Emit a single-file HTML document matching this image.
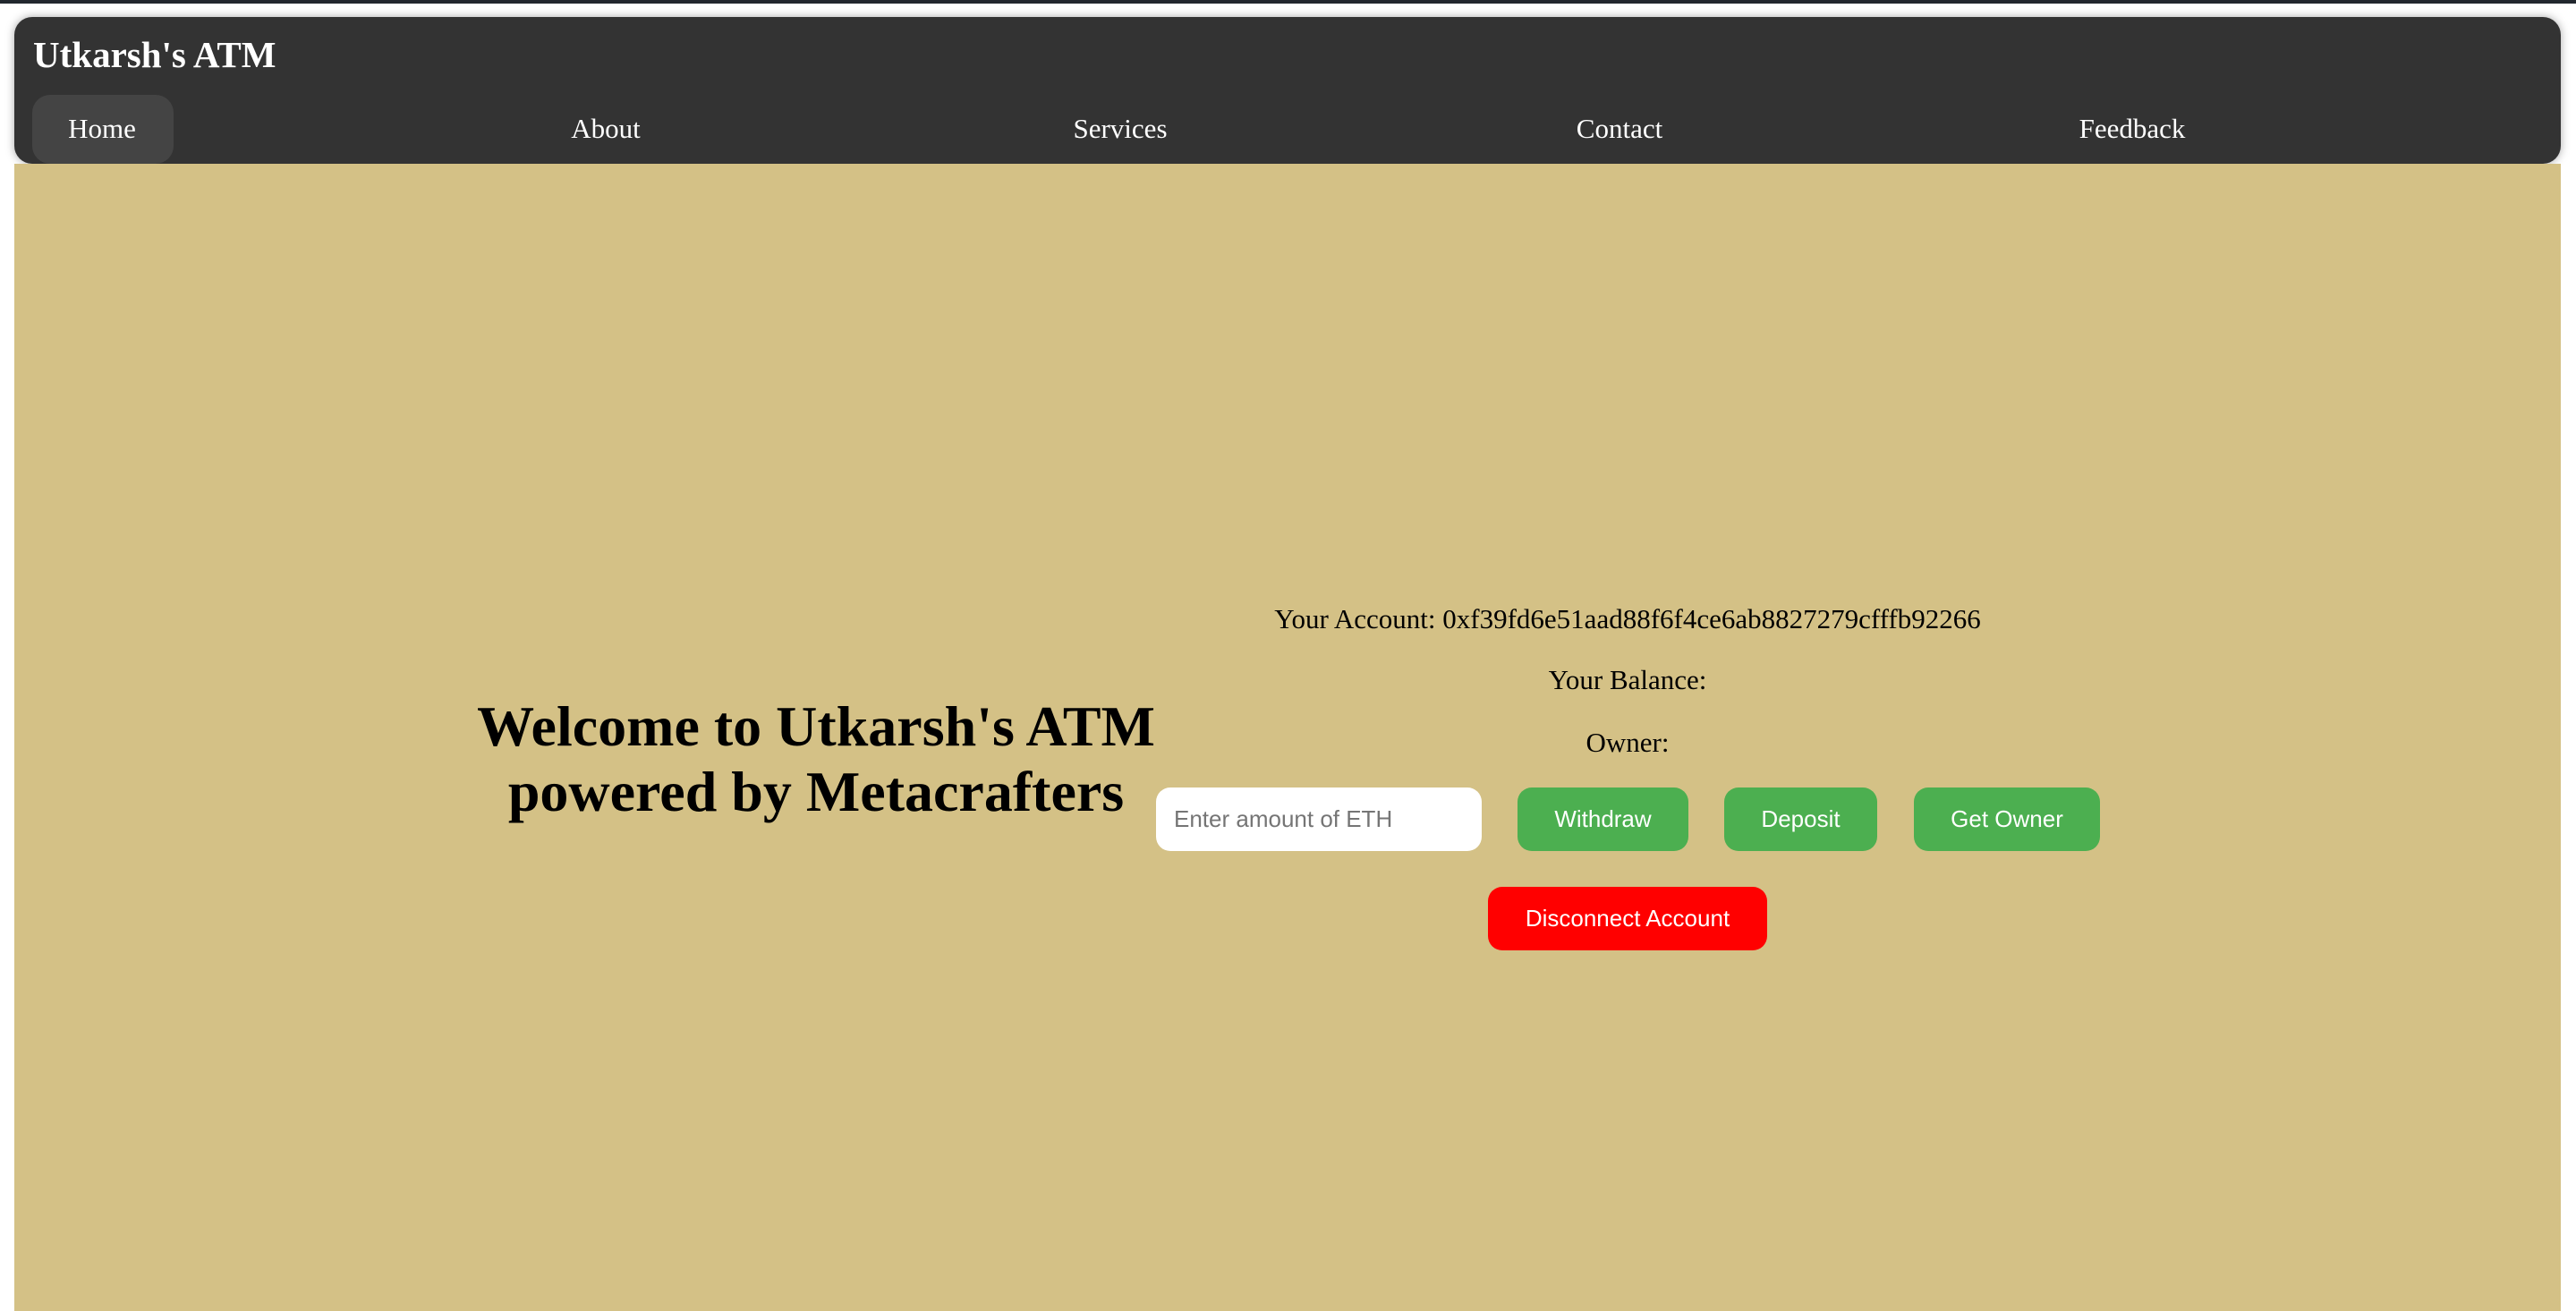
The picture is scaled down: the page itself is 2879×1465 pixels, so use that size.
<!DOCTYPE html>
<html><head><meta charset="utf-8"><style>
body{margin:0;width:2879px;height:1465px;background:#fff;position:relative;overflow:hidden;font-family:"Liberation Serif",serif}
.top{position:absolute;left:0;top:0;width:2879px;height:4px;background:#22272e}
.nav{position:absolute;left:16px;top:19px;width:2846px;height:164px;background:#333;border-radius:20px;box-shadow:0 0 10px rgba(0,0,0,.35)}
.title{position:absolute;left:37px;top:37px;color:#fff;font-weight:bold;font-size:41px;line-height:48px}
.home{position:absolute;left:36px;top:106px;width:158px;height:77px;background:#444;border-radius:20px}
.ni{position:absolute;top:124px;color:#fff;font-size:31px;line-height:40px;transform:translateX(-50%);white-space:nowrap}
.main{position:absolute;left:16px;top:183px;width:2846px;height:1282px;background:#d4c186}
.h{position:absolute;left:512px;top:775px;width:800px;text-align:center;font-weight:bold;font-size:64px;line-height:73px}
.t{position:absolute;left:1319px;width:1000px;text-align:center;font-size:31px;line-height:36px;white-space:nowrap}
.in{position:absolute;left:1292px;top:880px;width:364px;height:71px;background:#fff;border-radius:16px;font-family:"Liberation Sans",sans-serif;color:#757575;font-size:26px;line-height:71px;box-sizing:border-box;padding-left:20px}
.b{position:absolute;top:880px;height:71px;background:#4caf50;color:#fff;border-radius:16px;font-family:"Liberation Sans",sans-serif;font-size:26px;line-height:71px;text-align:center}
</style></head><body>
<div class="top"></div>
<div class="nav"></div>
<div class="title">Utkarsh's ATM</div>
<div class="home"></div>
<div class="ni" style="left:114px">Home</div>
<div class="ni" style="left:677px">About</div>
<div class="ni" style="left:1252px">Services</div>
<div class="ni" style="left:1810px">Contact</div>
<div class="ni" style="left:2383px">Feedback</div>
<div class="main"></div>
<div class="h">Welcome to Utkarsh's ATM<br>powered by Metacrafters</div>
<div class="t" style="top:674px">Your Account: 0xf39fd6e51aad88f6f4ce6ab8827279cfffb92266</div>
<div class="t" style="top:742px">Your Balance:</div>
<div class="t" style="top:812px">Owner:</div>
<div class="in">Enter amount of ETH</div>
<div class="b" style="left:1696px;width:191px">Withdraw</div>
<div class="b" style="left:1927px;width:171px">Deposit</div>
<div class="b" style="left:2139px;width:208px">Get Owner</div>
<div class="b" style="left:1663px;width:312px;top:991px;background:#ff0000">Disconnect Account</div>
</body></html>
